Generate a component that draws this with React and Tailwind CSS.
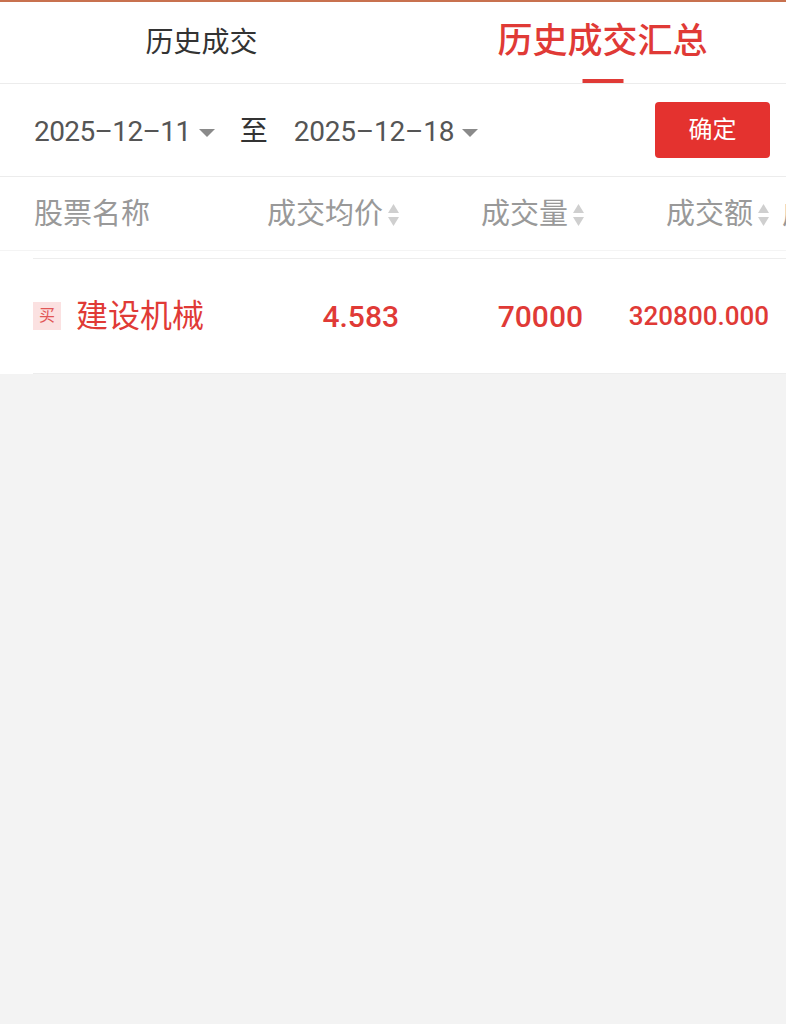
import React from "react";

const FONT = "font-['Roboto','Noto_Sans_CJK_SC',sans-serif]";

function SortIcon() {
  return (
    <svg width="13" height="24" viewBox="0 0 13 24" className="ml-[4px] shrink-0">
      <path d="M6.5 1 L12 10 L1 10 Z" fill="#cfcfcf" />
      <path d="M1 14 L12 14 L6.5 23 Z" fill="#cfcfcf" />
    </svg>
  );
}

function Caret() {
  return <span className="inline-block border-x-[8px] border-t-[8px] border-x-transparent border-t-[#8a8a8a]" />;
}

export default function App() {
  const rows = [
    { side: "买", name: "建设机械", price: "4.583", volume: "70000", amount: "320800.000" },
  ];

  return (
    <div className={`min-h-screen bg-[#f3f3f3] ${FONT}`}>
      <div className="h-[2px] bg-[#c8714f]" />

      {/* Tabs */}
      <div className="flex h-[82px] bg-white border-b border-[#ececec]">
        <div className="w-[403px] flex items-center justify-center text-[28px] text-[#333]">历史成交</div>
        <div className="relative flex-1 pl-[16px] flex items-center justify-center text-[35px] font-medium text-[#e03a36]">
          历史成交汇总
          <span className="absolute bottom-0 left-[calc(50%+8px)] -translate-x-1/2 w-[41px] h-[4px] bg-[#e03a36]" />
        </div>
      </div>

      {/* Date filter */}
      <div className="flex items-center h-[93px] bg-white border-b border-[#ececec] pl-[34px] pr-[16px]">
        <span className="mt-[4px] text-[28px] tracking-[-0.6px] text-[#555]">2025–12–11</span>
        <span className="ml-[8px] mt-[4px]"><Caret /></span>
        <span className="ml-[25px] mt-[4px] text-[28px] text-[#333]">至</span>
        <span className="ml-[26px] mt-[4px] text-[28px] tracking-[-0.2px] text-[#555]">2025–12–18</span>
        <span className="ml-[8px] mt-[4px]"><Caret /></span>
        <button className="ml-auto w-[115px] h-[56px] rounded-[4px] bg-[#e4322f] text-white text-[24px]">确定</button>
      </div>

      {/* Table */}
      <div className="bg-white overflow-hidden">
        <div className="flex items-center h-[74px] pl-[34px] border-b border-[#f4f4f4] text-[29px] text-[#999] whitespace-nowrap">
          <div className="w-[180px] shrink-0 mt-[2px]">股票名称</div>
          <div className="w-[186px] shrink-0 flex items-center justify-end mt-[2px]">成交均价<SortIcon /></div>
          <div className="w-[185px] shrink-0 flex items-center justify-end mt-[2px]">成交量<SortIcon /></div>
          <div className="w-[185px] shrink-0 flex items-center justify-end mt-[2px]">成交额<SortIcon /></div>
          <div className="shrink-0 pl-[12px] mt-[2px]">成交时间</div>
        </div>

        <div className="pl-[33px] pt-[7px]">
          {rows.map((r) => (
            <div key={r.name} className="flex items-center h-[116px] border-y border-[#ededed] whitespace-nowrap text-[#e03a36]">
              <div className="w-[181px] shrink-0 flex items-center">
                <span className="w-[28px] h-[28px] flex items-center justify-center bg-[#fbe1e1] text-[16px] text-[#e25656]">{r.side}</span>
                <span className="ml-[15px] text-[32px]">{r.name}</span>
              </div>
              <div className="w-[185px] shrink-0 text-right text-[30px] font-medium">{r.price}</div>
              <div className="w-[185px] shrink-0 text-right pr-[1px] text-[30px] font-medium">{r.volume}</div>
              <div className="w-[185px] shrink-0 text-right text-[26px] font-medium">{r.amount}</div>
            </div>
          ))}
        </div>
      </div>
    </div>
  );
}
